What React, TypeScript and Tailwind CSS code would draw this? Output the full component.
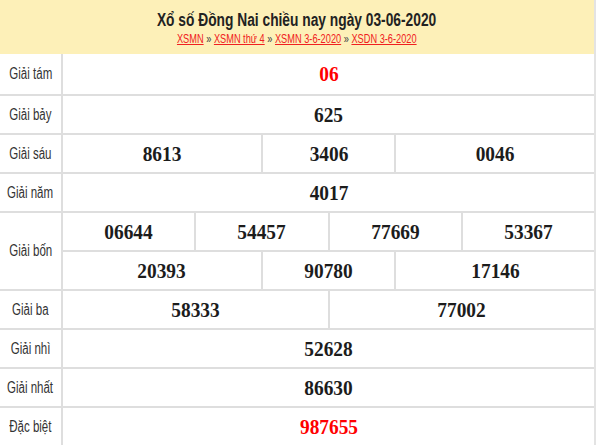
import React from "react";

const sans = "font-['Liberation_Sans',Arial,sans-serif]";
const serif = "font-['Liberation_Serif','Times_New_Roman',serif]";

function Label({ text, rowClass }: { text: string; rowClass: string }) {
  return (
    <div className={`bg-white flex items-center justify-center ${sans} ${rowClass}`}>
      <span className="inline-block text-[16px] text-[#333] scale-x-[0.72] whitespace-nowrap">{text}</span>
    </div>
  );
}

function Num({ v, span, red }: { v: string; span: string; red?: boolean }) {
  return (
    <div className={`bg-white flex items-center justify-center ${span} ${serif}`}>
      <span
        className={`inline-block font-bold text-[22px] leading-none scale-x-[0.88] ${red ? "text-[#f00]" : "text-[#1c1c1c]"}`}
      >
        {v}
      </span>
    </div>
  );
}

export default function App() {
  return (
    <div className="w-[600px] h-[445px] bg-white flex overflow-hidden">
      <div className="w-[594px] flex flex-col">
        <div className={`h-[54px] bg-[#fdf0b8] flex flex-col items-center pt-[9px] ${sans}`}>
          <div className="text-[18px] font-bold text-[#222] leading-[22px] whitespace-nowrap scale-x-[0.765]">
            Xổ số Đồng Nai chiều nay ngày 03-06-2020
          </div>
          <div className="text-[13px] leading-[16px] text-[#444] whitespace-nowrap scale-x-[0.71]">
            <a className="text-[#f02020] underline">XSMN</a> »{" "}
            <a className="text-[#f02020] underline">XSMN thứ 4</a> »{" "}
            <a className="text-[#f02020] underline">XSMN 3-6-2020</a> »{" "}
            <a className="text-[#f02020] underline">XSDN 3-6-2020</a>
          </div>
        </div>
        <div className="grid grid-cols-[61px_repeat(8,1fr)] grid-rows-[40px_repeat(9,37px)] gap-[2px] bg-[#dedede]">
          <Label text="Giải tám" rowClass="" />
          <Num v="06" span="col-span-8" red />

          <Label text="Giải bảy" rowClass="" />
          <Num v="625" span="col-span-8" />

          <Label text="Giải sáu" rowClass="" />
          <Num v="8613" span="col-span-3" />
          <Num v="3406" span="col-span-2" />
          <Num v="0046" span="col-span-3" />

          <Label text="Giải năm" rowClass="" />
          <Num v="4017" span="col-span-8" />

          <Label text="Giải bốn" rowClass="row-span-2" />
          <Num v="06644" span="col-span-2" />
          <Num v="54457" span="col-span-2" />
          <Num v="77669" span="col-span-2" />
          <Num v="53367" span="col-span-2" />
          <Num v="20393" span="col-span-3" />
          <Num v="90780" span="col-span-2" />
          <Num v="17146" span="col-span-3" />

          <Label text="Giải ba" rowClass="" />
          <Num v="58333" span="col-span-4" />
          <Num v="77002" span="col-span-4" />

          <Label text="Giải nhì" rowClass="" />
          <Num v="52628" span="col-span-8" />

          <Label text="Giải nhất" rowClass="" />
          <Num v="86630" span="col-span-8" />

          <Label text="Đặc biệt" rowClass="" />
          <Num v="987655" span="col-span-8" red />
        </div>
      </div>
      <div className="w-[2px] bg-[#e3e3e3]" />
    </div>
  );
}
